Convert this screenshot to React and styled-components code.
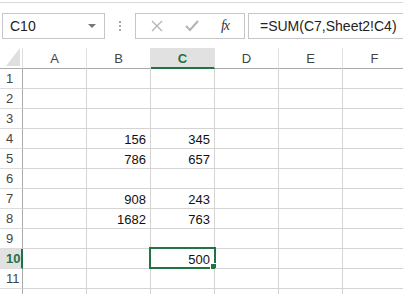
import React from 'react';
import styled, { createGlobalStyle } from 'styled-components';

const GlobalStyle = createGlobalStyle`
  html, body {
    margin: 0;
    padding: 0;
    background: #fff;
  }
  body {
    font-family: 'Liberation Sans', Arial, sans-serif;
    overflow: hidden;
  }
`;

const GREEN = '#217346';
const GRID = '#d4d4d4';
const HEADER_LINE = '#ababab';

const Page = styled.div`
  width: 403px;
  height: 294px;
  overflow: hidden;
  background: #fff;
`;

const TopRule = styled.div`
  margin-top: 2px;
  height: 1px;
  background: #d8d8d8;
`;

const FormulaBar = styled.div`
  display: flex;
  align-items: center;
  height: 26px;
  margin-top: 10px;
  padding-left: 2px;
  margin-bottom: 9px;
`;

const NameBox = styled.div`
  box-sizing: border-box;
  width: 103px;
  height: 26px;
  border: 1px solid #c6c6c6;
  display: flex;
  align-items: center;
  justify-content: space-between;
  padding: 0 8px 0 7px;
  font-size: 14px;
  color: #222;
`;

const Caret = styled.span`
  width: 0;
  height: 0;
  border-left: 4px solid transparent;
  border-right: 4px solid transparent;
  border-top: 4px solid #777;
`;

const Dots = styled.div`
  width: 30px;
  display: flex;
  flex-direction: column;
  align-items: center;
  gap: 2px;
  span {
    width: 2px;
    height: 2px;
    background: #a6a6a6;
  }
`;

const ButtonBox = styled.div`
  box-sizing: border-box;
  width: 110px;
  height: 26px;
  border: 1px solid #c6c6c6;
  display: flex;
  align-items: center;
  justify-content: space-around;
  padding: 0 4px;
`;

const Fx = styled.span`
  font-family: 'Liberation Serif', 'Times New Roman', serif;
  font-style: italic;
  font-size: 14px;
  color: #333;
  letter-spacing: -1px;
`;

const FormulaInput = styled.div`
  box-sizing: border-box;
  flex: 1;
  margin-left: 3px;
  height: 26px;
  border: 1px solid #c6c6c6;
  border-right: none;
  display: flex;
  align-items: center;
  padding-left: 11px;
  font-size: 14px;
  color: #222;
  white-space: nowrap;
`;

const Sheet = styled.div`
  display: grid;
  grid-template-columns: 23px repeat(6, 64px);
  grid-template-rows: 21px;
  grid-auto-rows: 20px;
`;

const Corner = styled.div`
  box-sizing: border-box;
  border-right: 1px solid #dcdcdc;
  border-bottom: 1px solid ${HEADER_LINE};
  position: relative;
  &::after {
    content: '';
    position: absolute;
    right: 2px;
    bottom: 2px;
    width: 0;
    height: 0;
    border-left: 14px solid transparent;
    border-bottom: 18px solid #dfdfdf;
  }
`;

const ColHead = styled.div`
  box-sizing: border-box;
  display: flex;
  align-items: center;
  justify-content: center;
  padding-top: 1px;
  font-size: 13px;
  border-right: 1px solid #e2e2e2;
  border-bottom: ${p => (p.$active ? `2px solid ${GREEN}` : `1px solid ${HEADER_LINE}`)};
  background: ${p => (p.$active ? '#e1e1e1' : '#fff')};
  color: ${p => (p.$active ? GREEN : '#444')};
  font-weight: ${p => (p.$active ? 700 : 400)};
`;

const RowHead = styled.div`
  box-sizing: border-box;
  display: flex;
  align-items: center;
  padding-left: 6px;
  font-size: 13px;
  border-bottom: 1px solid #dcdcdc;
  border-right: ${p => (p.$active ? `2px solid ${GREEN}` : `1px solid ${HEADER_LINE}`)};
  background: ${p => (p.$active ? '#e1e1e1' : '#fff')};
  color: ${p => (p.$active ? GREEN : '#444')};
  font-weight: ${p => (p.$active ? 700 : 400)};
`;

const Cell = styled.div`
  box-sizing: border-box;
  position: relative;
  display: flex;
  align-items: center;
  justify-content: flex-end;
  padding: 1px 4px 0 0;
  font-size: 13px;
  color: #111;
  border-right: 1px solid ${GRID};
  border-bottom: 1px solid ${GRID};
`;

const Selection = styled.div`
  position: absolute;
  left: -2px;
  top: -2px;
  right: -2px;
  bottom: -1px;
  border: 2px solid ${GREEN};
  pointer-events: none;
`;

const Handle = styled.div`
  position: absolute;
  right: -3px;
  bottom: -3px;
  width: 5px;
  height: 5px;
  background: ${GREEN};
  border: 1px solid #fff;
`;

const columns = ['A', 'B', 'C', 'D', 'E', 'F'];

const data = {
  4: { B: '156', C: '345' },
  5: { B: '786', C: '657' },
  7: { B: '908', C: '243' },
  8: { B: '1682', C: '763' },
  10: { C: '500' },
};

const active = { row: 10, col: 'C' };

// 11 numbered rows are visible; the 12th only peeks in at the bottom edge
const VISIBLE_ROWS = 11;

const App = () => {
  const rows = Array.from({ length: VISIBLE_ROWS + 1 }, (_, i) => i + 1);

  return (
    <Page>
      <GlobalStyle />
      <TopRule />
      <FormulaBar>
        <NameBox>
          C10
          <Caret />
        </NameBox>
        <Dots>
          <span />
          <span />
          <span />
        </Dots>
        <ButtonBox>
          <svg width="12" height="12" viewBox="0 0 12 12">
            <path d="M1 1 L11 11 M11 1 L1 11" stroke="#b3b3b3" strokeWidth="1.3" fill="none" />
          </svg>
          <svg width="14" height="12" viewBox="0 0 14 12">
            <path d="M1 6 L5 10 L13 1" stroke="#b3b3b3" strokeWidth="2" fill="none" />
          </svg>
          <Fx>fx</Fx>
        </ButtonBox>
        <FormulaInput>=SUM(C7,Sheet2!C4)</FormulaInput>
      </FormulaBar>

      <Sheet>
        <Corner />
        {columns.map(c => (
          <ColHead key={c} $active={c === active.col}>
            {c}
          </ColHead>
        ))}
        {rows.map(r => (
          <React.Fragment key={r}>
            <RowHead $active={r === active.row}>{r <= VISIBLE_ROWS ? r : ''}</RowHead>
            {columns.map(c => (
              <Cell key={c}>
                {data[r] && data[r][c]}
                {r === active.row && c === active.col && (
                  <Selection>
                    <Handle />
                  </Selection>
                )}
              </Cell>
            ))}
          </React.Fragment>
        ))}
      </Sheet>
    </Page>
  );
};

export default App;
